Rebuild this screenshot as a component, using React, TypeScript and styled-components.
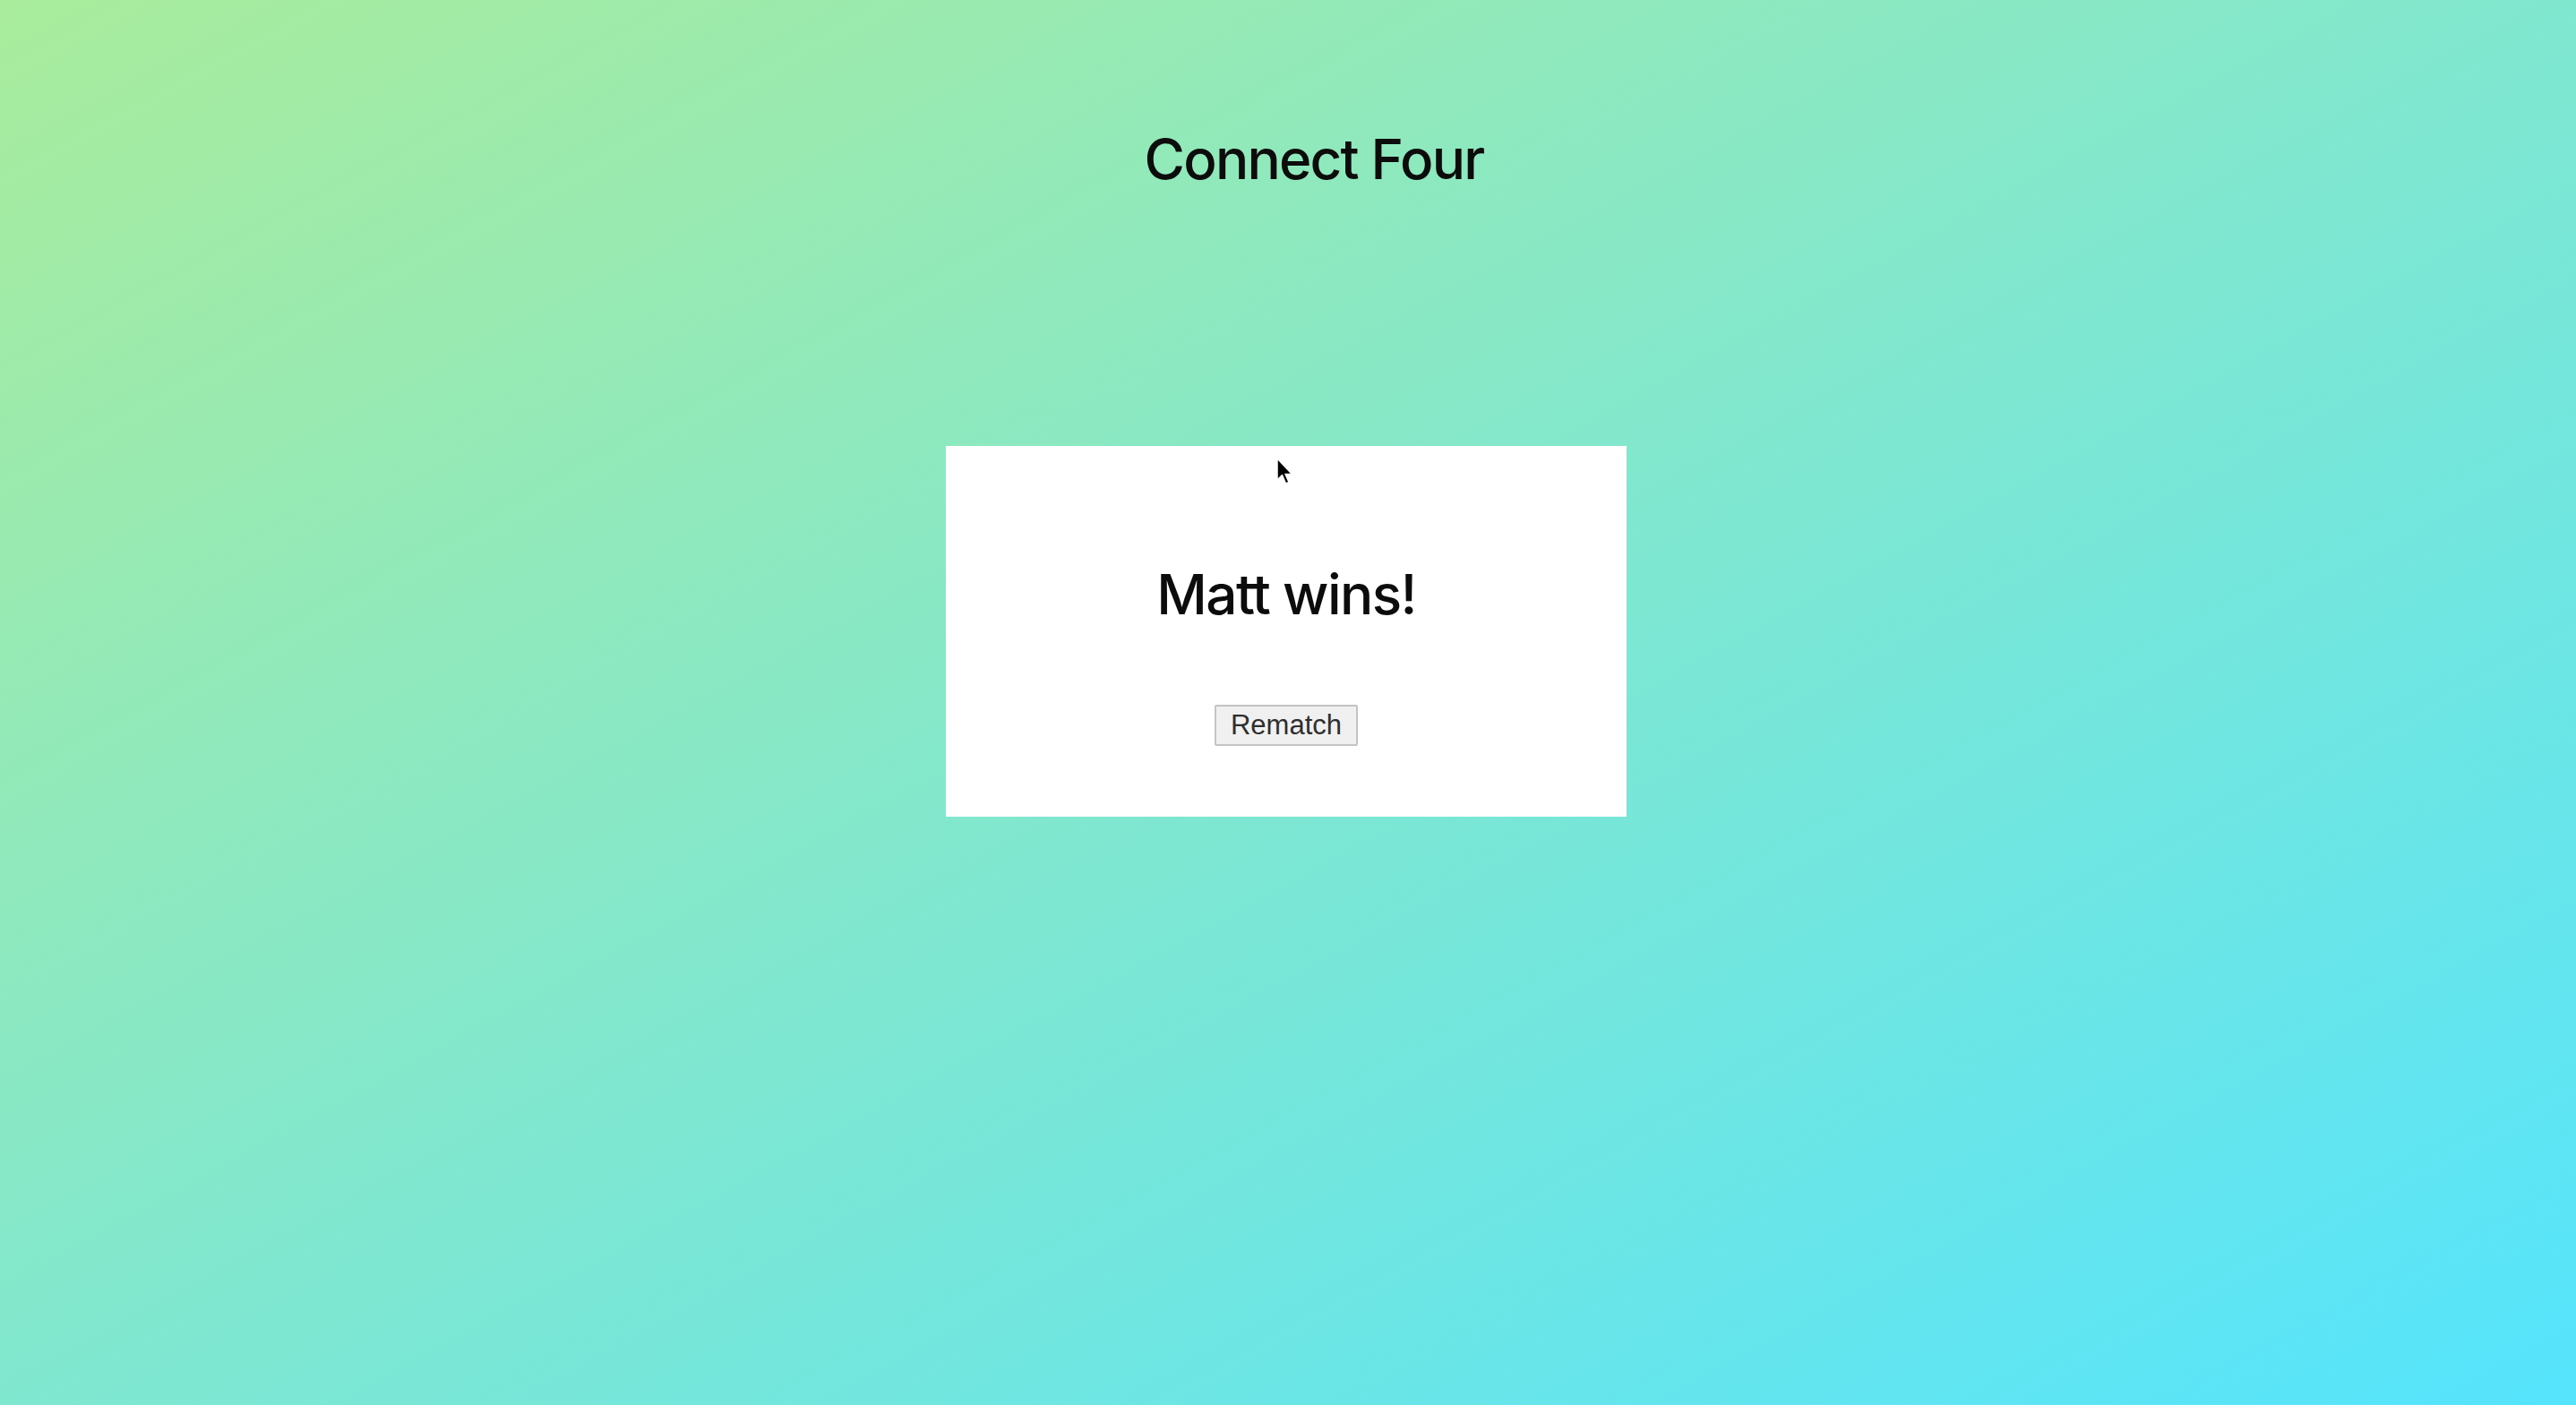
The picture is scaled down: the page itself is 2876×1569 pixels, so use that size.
import React from "react";
import styled, { createGlobalStyle } from "styled-components";

const GlobalStyle = createGlobalStyle`
  html, body {
    margin: 0;
    padding: 0;
    height: 100%;
  }
  body {
    font-family: Inter, "Noto Sans", "Liberation Sans", sans-serif;
  }
  #root {
    min-height: 100%;
  }
`;

const Page = styled.main`
  position: relative;
  box-sizing: border-box;
  width: 100%;
  min-height: 100vh;
  padding-top: 140px;
  display: flex;
  flex-direction: column;
  align-items: center;
  background: linear-gradient(to bottom right, #a9ec9c 0%, #80e7cf 50%, #55e4fd 100%);
`;

const Title = styled.h1`
  margin: 0 0 0 58px;
  font-size: 62px;
  font-weight: 500;
  line-height: normal;
  color: #0c0c0c;
  letter-spacing: -1.8px;
`;

const Card = styled.section`
  box-sizing: border-box;
  width: 760px;
  height: 414px;
  margin: 283px 4px 0 0;
  padding-top: 128px;
  background: #ffffff;
  display: flex;
  flex-direction: column;
  align-items: center;
`;

const Winner = styled.h2`
  margin: 0;
  font-size: 62px;
  font-weight: 500;
  line-height: normal;
  color: #0c0c0c;
  letter-spacing: -1.6px;
`;

const Button = styled.button`
  margin-top: 86px;
  box-sizing: border-box;
  width: 160px;
  height: 46px;
  padding: 0;
  border: 2px solid #c4c4c4;
  border-radius: 2px;
  background: #f0f0f0;
  color: #2e2e2e;
  font-family: "Liberation Sans", Arial, sans-serif;
  font-size: 31px;
  cursor: pointer;
`;

const Pointer = styled.svg`
  position: absolute;
  left: 1424px;
  top: 511px;
  width: 20px;
  height: 32px;
  pointer-events: none;
`;

export default function App() {
  return (
    <>
      <GlobalStyle />
      <Page>
        <Title>Connect Four</Title>
        <Card>
          <Winner>Matt wins!</Winner>
          <Button type="button">Rematch</Button>
        </Card>
        <Pointer viewBox="0 0 20 32" aria-hidden="true">
          <path
            d="M2 1 L2 25 L7.5 19.5 L11.5 29 L15 27.5 L11 18.5 L18.5 18.5 Z"
            fill="#000"
            stroke="#fff"
            strokeWidth="1.5"
            strokeLinejoin="round"
          />
        </Pointer>
      </Page>
    </>
  );
}
